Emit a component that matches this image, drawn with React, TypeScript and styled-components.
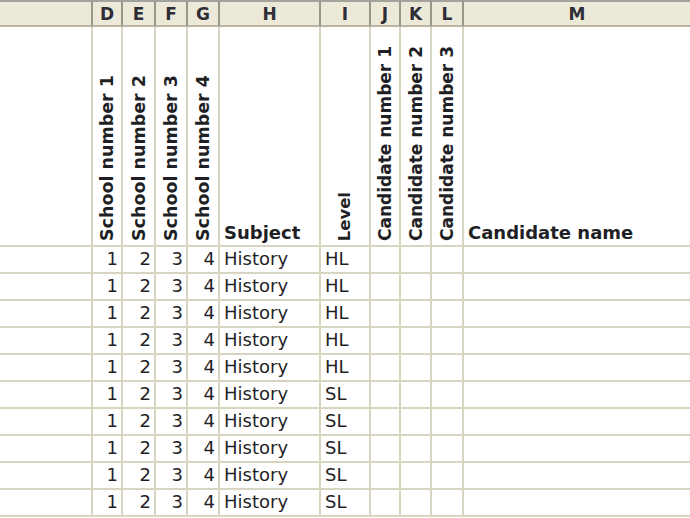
import React from 'react';
import styled, { createGlobalStyle } from 'styled-components';

const GlobalStyle = createGlobalStyle`
  html, body { margin: 0; padding: 0; background: #ffffff; overflow: hidden; }
  body { font-family: 'DejaVu Sans', 'Liberation Sans', sans-serif; color: #1f1f26; }
`;

const LINE = '#d8d4c2';

const Sheet = styled.div`
  display: grid;
  grid-template-columns: 93px 30px 33px 32px 32px 101px 50px 30px 31px 32px 1fr;
  grid-template-rows: 27px 220px repeat(10, 27px);
  width: 690px;
  height: 518px;
  overflow: hidden;
`;

const ColHeader = styled.div<{ $last?: boolean }>`
  box-sizing: border-box;
  background: #ece9d8;
  border-top: 2px solid #a3a29c;
  border-bottom: 2px solid #b9b6a4;
  border-right: ${(p) => (p.$last ? 'none' : '2px solid #9a978a')};
  display: flex;
  align-items: center;
  justify-content: center;
  font-size: 17px;
  font-weight: bold;
  color: #2e2e36;
  padding-top: 1px;
`;

const TitleCell = styled.div<{ $vertical?: boolean; $last?: boolean }>`
  box-sizing: border-box;
  border-right: ${(p) => (p.$last ? 'none' : `2px solid ${LINE}`)};
  border-bottom: 2px solid ${LINE};
  display: flex;
  align-items: flex-end;
  justify-content: ${(p) => (p.$vertical ? 'center' : 'flex-start')};
  padding: ${(p) => (p.$vertical ? '0 0 4px 0' : '0 0 1px 4px')};
  font-weight: bold;
  font-size: 18px;
  line-height: 22px;
  white-space: nowrap;
  overflow: hidden;
`;

const VerticalText = styled.span<{ $size: number }>`
  writing-mode: vertical-rl;
  transform: rotate(180deg);
  font-size: ${(p) => p.$size}px;
  line-height: 20px;
  white-space: nowrap;
`;

const DataCell = styled.div<{ $right?: boolean; $last?: boolean }>`
  box-sizing: border-box;
  border-right: ${(p) => (p.$last ? 'none' : `2px solid ${LINE}`)};
  border-bottom: 2px solid ${LINE};
  display: flex;
  align-items: flex-end;
  justify-content: ${(p) => (p.$right ? 'flex-end' : 'flex-start')};
  padding: ${(p) => (p.$right ? '0 3px 2px 0' : '0 0 2px 4px')};
  font-size: 18px;
  line-height: 22px;
  white-space: nowrap;
`;

const letters = ['', 'D', 'E', 'F', 'G', 'H', 'I', 'J', 'K', 'L', 'M'];

type Title = { text: string; vertical: boolean; size?: number };
const titles: Title[] = [
  { text: '', vertical: false },
  { text: 'School number 1', vertical: true, size: 17.5 },
  { text: 'School number 2', vertical: true, size: 17.5 },
  { text: 'School number 3', vertical: true, size: 17.5 },
  { text: 'School number 4', vertical: true, size: 17.5 },
  { text: 'Subject', vertical: false },
  { text: 'Level', vertical: true, size: 16.5 },
  { text: 'Candidate number 1', vertical: true, size: 17 },
  { text: 'Candidate number 2', vertical: true, size: 17 },
  { text: 'Candidate number 3', vertical: true, size: 17 },
  { text: 'Candidate name', vertical: false },
];

const levels = ['HL', 'HL', 'HL', 'HL', 'HL', 'SL', 'SL', 'SL', 'SL', 'SL'];

export default function App() {
  return (
    <>
      <GlobalStyle />
      <Sheet>
        {letters.map((l, i) => (
          <ColHeader key={`h${i}`} $last={i === letters.length - 1}>
            {l}
          </ColHeader>
        ))}
        {titles.map((t, i) => (
          <TitleCell key={`t${i}`} $vertical={t.vertical} $last={i === titles.length - 1}>
            {t.vertical ? <VerticalText $size={t.size ?? 17.5}>{t.text}</VerticalText> : t.text}
          </TitleCell>
        ))}
        {levels.map((lv, r) => (
          <React.Fragment key={`r${r}`}>
            <DataCell />
            <DataCell $right>1</DataCell>
            <DataCell $right>2</DataCell>
            <DataCell $right>3</DataCell>
            <DataCell $right>4</DataCell>
            <DataCell>History</DataCell>
            <DataCell>{lv}</DataCell>
            <DataCell />
            <DataCell />
            <DataCell />
            <DataCell $last />
          </React.Fragment>
        ))}
      </Sheet>
    </>
  );
}
